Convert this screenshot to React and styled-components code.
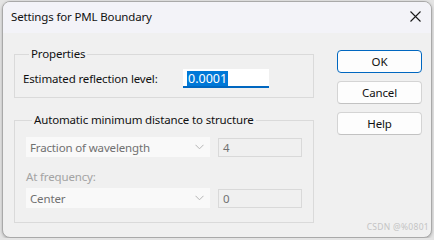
import React from 'react'
import styled, { createGlobalStyle } from 'styled-components'

const Global = createGlobalStyle`
  html, body { margin: 0; padding: 0; background: #e4e4e4; }
  body { font-family: "Noto Sans", "Liberation Sans", sans-serif; font-size: 11.5px; letter-spacing: -0.15px; color: #1a1a1a; }
  * { box-sizing: border-box; }
`

const Win = styled.div`
  position: relative;
  margin: 1px 0 0 2px;
  width: 430px;
  height: 237px;
  border: 1px solid #a9a9a9;
  border-radius: 8px;
  background: #f0f0f0;
  overflow: hidden;
  box-shadow: 0 1px 3px rgba(0,0,0,0.25);
`

const TitleBar = styled.div`
  height: 31px;
  background: #f3f3f8;
  display: flex;
  align-items: center;
  justify-content: space-between;
  padding: 0 9px 2px 8px;
  color: #111;
`

const Close = styled.svg`
  width: 11px;
  height: 11px;
  margin-right: 1px;
`

const Body = styled.div`
  display: flex;
  align-items: flex-start;
  padding: 14px 0 0 11px;
`

const Left = styled.div`
  width: 300px;
  display: flex;
  flex-direction: column;
  gap: 15px;
`

const Group = styled.fieldset`
  margin: 0;
  padding: ${({ $pad }) => $pad};
  border: 1px solid #dadada;
  border-radius: 0;
  min-width: 0;
`

const Legend = styled.legend`
  padding: 0 2px;
  margin-left: 6px;
  line-height: 14px;
  color: #111;
`

const Row = styled.div`
  display: flex;
  align-items: center;
  gap: ${({ $gap }) => $gap || '0'};
`

const Label = styled.span`
  width: 160px;
  color: #111;
`

const Input = styled.div`
  width: 86px;
  height: 19px;
  background: #fff;
  border-bottom: 2px solid #0067c0;
  padding: 2px 0 0 4px;
`

const Selected = styled.span`
  display: inline-block;
  background: #0078d7;
  color: #fff;
  line-height: 15px;
  padding: 0 1px;
  font-size: 12.5px;
  letter-spacing: 0;
`

const Combo = styled.div`
  width: 184px;
  height: 20px;
  background: #f9f9f9;
  display: flex;
  align-items: center;
  justify-content: space-between;
  padding: 0 6px 0 4px;
  color: #707070;
`

const Chevron = styled.svg`
  width: 9px;
  height: 6px;
`

const Field = styled.div`
  width: 84px;
  height: 19px;
  border: 1px solid #d9d9d9;
  display: flex;
  align-items: center;
  padding-left: 4px;
  color: #707070;
`

const SubLabel = styled.div`
  color: #a3a3a3;
  margin: 12px 0 3px;
  line-height: 16px;
`

const Buttons = styled.div`
  display: flex;
  flex-direction: column;
  gap: 8px;
  margin: 3px 0 0 23px;
`

const Button = styled.button`
  width: 85px;
  height: 23px;
  font: inherit;
  letter-spacing: inherit;
  color: #111;
  background: #fdfdfd;
  border: 1px solid ${({ $primary }) => ($primary ? '#0067c0' : '#d4d4d4')};
  border-bottom-color: ${({ $primary }) => ($primary ? '#0067c0' : '#c2c2c2')};
  border-radius: 4px;
  padding: 0;
`

const Watermark = styled.div`
  position: absolute;
  right: 2px;
  bottom: 5px;
  font-size: 8.5px;
  color: #c4c4c4;
  letter-spacing: 0.3px;
`

const DropDown = ({ value }) => (
  <Combo>
    <span>{value}</span>
    <Chevron viewBox="0 0 9 6">
      <path d="M0.5 0.8 L4.5 4.8 L8.5 0.8" fill="none" stroke="#b5b5b5" strokeWidth="1" />
    </Chevron>
  </Combo>
)

export default function App() {
  return (
    <>
      <Global />
      <Win>
        <TitleBar>
          <span>Settings for PML Boundary</span>
          <Close viewBox="0 0 11 11">
            <path d="M0.5 0.5 L10.5 10.5 M10.5 0.5 L0.5 10.5" stroke="#1a1a1a" strokeWidth="1.1" />
          </Close>
        </TitleBar>
        <Body>
          <Left>
            <Group $pad="8px 8px 9px 8px">
              <Legend>Properties</Legend>
              <Row>
                <Label>Estimated reflection level:</Label>
                <Input>
                  <Selected>0.0001</Selected>
                </Input>
              </Row>
            </Group>
            <Group $pad="10px 11px 14px 11px">
              <Legend>Automatic minimum distance to structure</Legend>
              <Row $gap="8px">
                <DropDown value="Fraction of wavelength" />
                <Field>4</Field>
              </Row>
              <SubLabel>At frequency:</SubLabel>
              <Row $gap="8px">
                <DropDown value="Center" />
                <Field>0</Field>
              </Row>
            </Group>
          </Left>
          <Buttons>
            <Button $primary>OK</Button>
            <Button>Cancel</Button>
            <Button>Help</Button>
          </Buttons>
        </Body>
        <Watermark>CSDN @%0801</Watermark>
      </Win>
    </>
  )
}
